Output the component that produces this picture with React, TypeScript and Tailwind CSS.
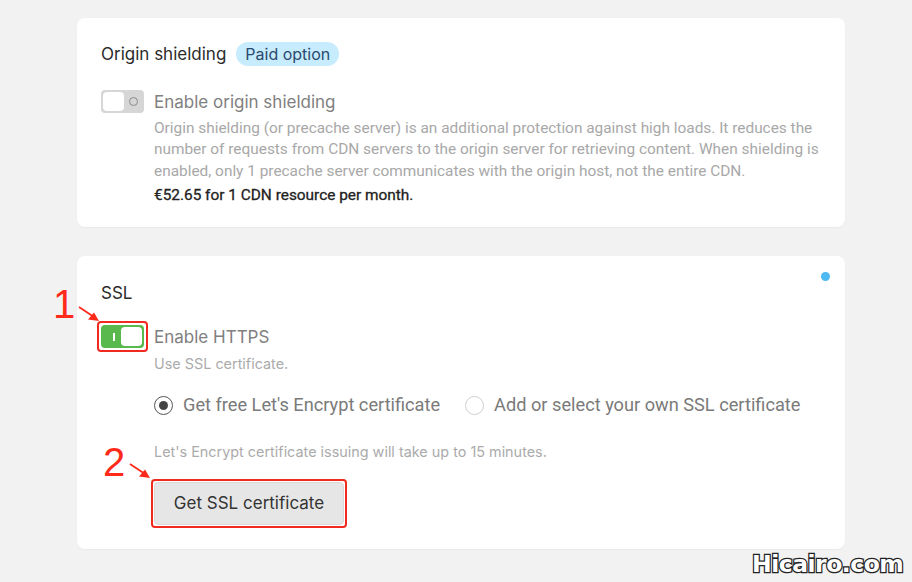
import React from "react";

const inter = "font-['Inter',_'Liberation_Sans',_sans-serif]";
const roboto = "font-['Roboto',_'Liberation_Sans',_sans-serif]";

function Toggle({ on }: { on: boolean }) {
    if (on) {
        return (
            <div className="relative w-[43px] h-[23px] rounded-[4px] bg-[#59b94d] flex items-center justify-between p-[2px] shrink-0">
                <span className="ml-[10px] w-[1.5px] h-[8px] bg-white" />
                <span className="w-[21px] h-[19px] rounded-[4px] bg-white" />
            </div>
        );
    }
    return (
        <div className="w-[43px] h-[23px] rounded-[4px] bg-[#d6d6d6] flex items-center p-[2px] shrink-0">
            <span className="w-[21px] h-[19px] rounded-[4px] bg-white" />
            <span className="ml-[5px] w-[9px] h-[9px] rounded-full border border-[#8a8a8a]" />
        </div>
    );
}

function Radio({ checked, label }: { checked: boolean; label: string }) {
    return (
        <label className="flex items-center gap-[10px]">
            <span
                className={`w-[19px] h-[19px] rounded-full border flex items-center justify-center bg-white ${
                    checked ? "border-[#555]" : "border-[#d0d0d0]"
                }`}
            >
                {checked && <span className="w-[9px] h-[9px] rounded-full bg-[#444]" />}
            </span>
            <span className={`${roboto} text-[18.2px] leading-5 text-[#7a7a7a]`}>{label}</span>
        </label>
    );
}

function Arrow() {
    return (
        <svg width="22" height="16" viewBox="0 0 22 16">
            <path d="M1 1 L16 11" stroke="#ff2a1a" strokeWidth="1.8" fill="none" />
            <path d="M21 15 L10 13.5 L16 6.5 Z" fill="#ff2a1a" />
        </svg>
    );
}

export default function App() {
    return (
        <div className={`relative min-h-[582px] w-[912px] bg-[#f2f2f2] pt-[18px] ${inter}`}>
            {/* Origin shielding */}
            <section className="ml-[77px] w-[768px] bg-white rounded-[8px] shadow-[0_1px_2px_rgba(0,0,0,0.04)] pt-[24px] pb-[22px] px-6">
                <div className="flex items-center gap-[10px] h-6">
                    <h2 className="text-[17px] leading-6 text-[#2b2b2b]">Origin shielding</h2>
                    <span className="h-6 px-[9px] rounded-full bg-[#c7ecfd] text-[#2c4a6e] text-[16px] leading-6">
                        Paid option
                    </span>
                </div>
                <div className="mt-6 flex items-center gap-[10px] h-[23px]">
                    <Toggle on={false} />
                    <span className="text-[17px] leading-[22px] text-[#808080]">Enable origin shielding</span>
                </div>
                <div className="pl-[53px] mt-[4.5px]">
                    <p className={`${roboto} text-[15.4px] leading-[21.5px] text-[#a8a8a8]`}>
                        Origin shielding (or precache server) is an additional protection against high loads. It reduces the
                        number of requests from CDN servers to the origin server for retrieving content. When shielding is
                        enabled, only 1 precache server communicates with the origin host, not the entire CDN.
                    </p>
                    <p className={`${roboto} mt-[3px] text-[15.4px] leading-5 text-[#222] [-webkit-text-stroke:0.3px_#222]`}>
                        €52.65 for 1 CDN resource per month.
                    </p>
                </div>
            </section>

            {/* SSL */}
            <section className="relative mt-[29px] ml-[77px] w-[768px] bg-white rounded-[8px] shadow-[0_1px_2px_rgba(0,0,0,0.04)] pt-[25px] pb-[24px] px-6">
                <span className="absolute top-[16px] right-[15px] w-[9px] h-[9px] rounded-full bg-[#4fb9f2]" />
                <h2 className="text-[17px] leading-6 text-[#2b2b2b]">SSL</h2>
                <div className="mt-5 flex items-center gap-[10px] h-[23px]">
                    <div className="relative">
                        <Toggle on />
                        <span className="absolute -inset-[4px] rounded-[4px] border-2 border-[#f02a1f]" />
                    </div>
                    <span className="text-[17px] leading-[22px] text-[#808080]">Enable HTTPS</span>
                </div>
                <div className="pl-[53px]">
                    <p className="mt-[6px] text-[14.4px] leading-5 text-[#ababab]">Use SSL certificate.</p>
                    <div className="mt-[21px] flex items-center gap-[25px] h-5">
                        <Radio checked label="Get free Let's Encrypt certificate" />
                        <Radio checked={false} label="Add or select your own SSL certificate" />
                    </div>
                    <p className="mt-[27px] text-[14.4px] leading-5 text-[#ababab]">
                        Let's Encrypt certificate issuing will take up to 15 minutes.
                    </p>
                    <div className="mt-5 relative flex w-fit">
                        <button className="w-[190px] h-[43px] rounded-[4px] bg-[#e6e6e6] border border-[#d9d9d9] text-[17px] text-[#333]">
                            Get SSL certificate
                        </button>
                        <span className="absolute -inset-[3px] rounded-[4px] border-2 border-[#f02a1f]" />
                    </div>
                </div>
            </section>

            {/* annotations */}
            <span className="absolute left-[53px] top-[283px] text-[40px] leading-[42px] text-[#ff2a1a] font-['Liberation_Sans',_sans-serif]">
                1
            </span>
            <span className="absolute left-[78px] top-[306px]">
                <Arrow />
            </span>
            <span className="absolute left-[103px] top-[441px] text-[40px] leading-[42px] text-[#ff2a1a] font-['Liberation_Sans',_sans-serif]">
                2
            </span>
            <span className="absolute left-[129px] top-[463px]">
                <Arrow />
            </span>

            {/* watermark */}
            <span className="absolute left-[752px] top-[550px] text-[23.5px] leading-[28px] font-black tracking-[-0.5px] text-white font-['DejaVu_Sans',_sans-serif] [-webkit-text-stroke:2.5px_#222] [paint-order:stroke_fill]">
                Hicairo.com
            </span>
        </div>
    );
}
